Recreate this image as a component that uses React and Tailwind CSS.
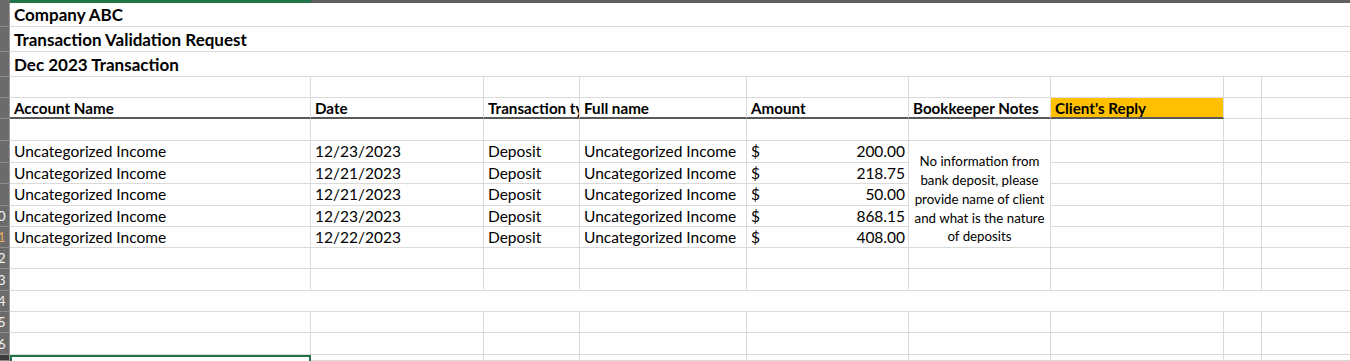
import React from 'react';

/**
 * Spreadsheet view: Company ABC transaction validation request
 */
const rows = [
  { date: '12/23/2023', amount: '200.00' },
  { date: '12/21/2023', amount: '218.75' },
  { date: '12/21/2023', amount: '50.00' },
  { date: '12/23/2023', amount: '868.15' },
  { date: '12/22/2023', amount: '408.00' },
];

const notes = [
  'No information from',
  'bank deposit, please',
  'provide name of client',
  'and what is the nature',
  'of deposits',
];

function Cell({ children, className = '', last }) {
  return (
    <div
      className={`flex items-center overflow-hidden whitespace-nowrap border-b border-[#dadada] pl-1 pt-px ${
        last ? '' : 'border-r'
      } ${className}`}
    >
      {children}
    </div>
  );
}

// only the right edge of the row header is in view, so just the last digit of 10+ peeks out
function RowHead({ n }) {
  const selected = n === 17;
  return (
    <div
      className={`overflow-hidden border-r border-b border-r-[#9a9a9a] border-b-[#8c8c8c] text-[14px] leading-none ${
        selected ? 'bg-[#3b3b3b]' : 'bg-[#6b6b6b]'
      } ${n === 11 ? 'text-[#e8ac62]' : 'text-[#f2f2f2]'}`}
    >
      {n >= 10 && !selected && (
        <div className="-ml-[15px] flex h-full w-[25px] items-center justify-center">{n}</div>
      )}
    </div>
  );
}

function EmptyRow({ n }) {
  return (
    <>
      <RowHead n={n} />
      <Cell />
      <Cell />
      <Cell />
      <Cell />
      <Cell />
      <Cell />
      <Cell />
      <Cell />
      <Cell last />
    </>
  );
}

function WideRow({ n, children, className = '' }) {
  return (
    <>
      <RowHead n={n} />
      <Cell last className={`col-span-9 ${className}`}>
        {children}
      </Cell>
    </>
  );
}

const head = 'border-b-2 border-b-[#595959] pt-[3px] font-bold text-[15.2px]';

export default function App() {
  return (
    <div className="h-[361px] w-[1350px] overflow-hidden bg-white font-['Lato','Liberation_Sans',sans-serif] text-[15.5px] text-black">
      <div className="flex h-[3px]">
        <div className="w-[10px] bg-[#6b6b6b]" />
        <div className="w-[301px] bg-[#217346]" />
        <div className="flex-1 bg-[#5f5f5f]" />
      </div>

      <div className="grid h-[358px] grid-cols-[10px_301px_173px_96px_167px_162px_142px_173px_38px_1fr] grid-rows-[24px_25px_25px_21px_21px_22px_22px_21px_22px_21px_21px_21px_22px_21px_21px_22px_1fr]">
        <WideRow n={1} className="text-[17px] font-bold">Company ABC</WideRow>
        <WideRow n={2} className="text-[17px] font-bold">Transaction Validation Request</WideRow>
        <WideRow n={3} className="text-[17px] font-bold">Dec 2023 Transaction</WideRow>

        <EmptyRow n={4} />

        {/* header row */}
        <RowHead n={5} />
        <Cell className={head}>Account Name</Cell>
        <Cell className={head}>Date</Cell>
        <Cell className={head}>Transaction type</Cell>
        <Cell className={head}>Full name</Cell>
        <Cell className={head}>Amount</Cell>
        <Cell className={head}>Bookkeeper Notes</Cell>
        <Cell className={`${head} bg-[#ffc000]`}>Client's Reply</Cell>
        <Cell />
        <Cell last />

        <EmptyRow n={6} />

        {rows.map((r, i) => (
          <React.Fragment key={i}>
            <RowHead n={7 + i} />
            <Cell className="pt-[2px]">Uncategorized Income</Cell>
            <Cell className="pt-[2px]">{r.date}</Cell>
            <Cell className="pt-[2px]">Deposit</Cell>
            <Cell className="pt-[2px]">Uncategorized Income</Cell>
            <Cell className="justify-between pr-[3px] pt-[2px]">
              <span>$</span>
              <span>{r.amount}</span>
            </Cell>
            {i === 0 && (
              <div className="row-span-5 flex flex-col items-center justify-end border-r border-b border-[#dadada] pb-[1px] text-center text-[13.3px] leading-[18.7px]">
                {notes.map((line) => (
                  <div key={line}>{line}</div>
                ))}
              </div>
            )}
            <Cell />
            <Cell />
            <Cell last />
          </React.Fragment>
        ))}

        <EmptyRow n={12} />
        <EmptyRow n={13} />
        <WideRow n={14} />
        <EmptyRow n={15} />
        <EmptyRow n={16} />

        {/* row 17, active cell A17 */}
        <RowHead n={17} />
        <div className="border-x-2 border-t-2 border-[#217346]" />
        <Cell />
        <Cell />
        <Cell />
        <Cell />
        <Cell />
        <Cell />
        <Cell />
        <Cell last />
      </div>
    </div>
  );
}
